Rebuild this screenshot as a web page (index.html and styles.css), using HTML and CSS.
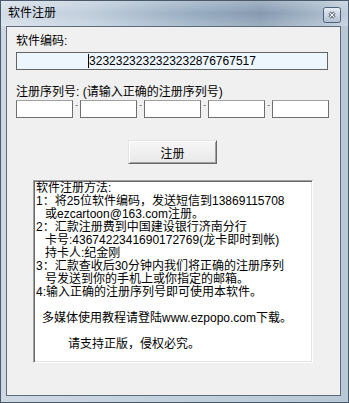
FILE: index.html
```html
<!DOCTYPE html>
<html lang="zh-CN">
<head>
<meta charset="UTF-8">
<title>软件注册</title>

<link rel="stylesheet" href="styles.css">
</head>

<body>

<div class="window">

    <div class="titlebar">
        <span class="title">软件注册</span>
        <span class="close">
            <svg width="18" height="16" viewBox="0 0 18 16">
                <defs>
                    <linearGradient id="closeBg" x1="0" y1="0" x2="0" y2="1">
                        <stop offset="0" stop-color="#e6edf4"/>
                        <stop offset="1" stop-color="#afbfd0"/>
                    </linearGradient>
                </defs>
                <rect x="0.5" y="0.5" width="17" height="15" rx="2" fill="url(#closeBg)" stroke="#4f6279"/>
                <path d="M6.5 5.5l5 5M11.5 5.5l-5 5" stroke="#2a3746" stroke-width="2.8"/>
                <path d="M6.5 5.5l5 5M11.5 5.5l-5 5" stroke="#fff" stroke-width="1.1"/>
            </svg>
        </span>
    </div>

    <div class="frame">
        <div class="client">

            <div class="label">软件编码:</div>
            <div class="code"><span class="value">3232323232323232876767517</span></div>

            <div class="label serialLabel">注册序列号: (请输入正确的注册序列号)</div>
            <div class="serial">
                <input class="part">
                <span class="sep">-</span>
                <input class="part">
                <span class="sep">-</span>
                <input class="part">
                <span class="sep">-</span>
                <input class="part">
                <span class="sep">-</span>
                <input class="part">
            </div>

            <button class="register">注册</button>

            <div class="help">
                <div>软件注册方法:</div>
                <div>1：将25位软件编码，发送短信到13869115708</div>
                <div class="sub">或ezcartoon@163.com注册。</div>
                <div>2：汇款注册费到中国建设银行济南分行</div>
                <div class="sub">卡号:4367422341690172769(龙卡即时到帐)</div>
                <div class="sub">持卡人:纪金刚</div>
                <div>3：汇款查收后30分钟内我们将正确的注册序列</div>
                <div class="sub">号发送到你的手机上或你指定的邮箱。</div>
                <div>4:输入正确的注册序列号即可使用本软件。</div>
                <div class="blank"></div>
                <div class="web">多媒体使用教程请登陆www.ezpopo.com下载。</div>
                <div class="blank"></div>
                <div class="notice">请支持正版，侵权必究。</div>
            </div>

        </div>
    </div>

</div>

</body>
</html>
```

FILE: styles.css
```css
body{
    margin:0;
    font-family:"Liberation Sans","Noto Sans CJK SC",sans-serif;
    font-size:12px;
    color:#000;
}

.window{
    width:349px;
    height:403px;
    box-sizing:border-box;
    border:1px solid #4b5a6a;
    background:linear-gradient(90deg,#cdd8e3,#bac8d6);
    display:flex;
    flex-direction:column;
}

.titlebar{
    height:25px;
    flex:none;
    display:flex;
    align-items:flex-start;
    padding-left:7px;
    background:
        linear-gradient(rgba(255,255,255,0.25),rgba(255,255,255,0) 50%,rgba(255,255,255,0.2)),
        linear-gradient(90deg,#d3dde7 0%,#c0cedc 25%,#97acc1 55%,#8599b0 75%,#a5b7c9 92%,#c0cddb 100%);
}

.title{
    margin-top:6px;
    line-height:13px;
}

.close{
    margin-left:auto;
    margin-right:7px;
    margin-top:6px;
    height:16px;
}

.close svg{
    display:block;
}

.frame{
    flex:1;
    display:flex;
    padding:0 7px 6px 5px;
}

.client{
    flex:1;
    border:1px solid #5c6b7b;
    background:#f0f0f0;
    padding:8px 11px 0 9px;
}

.label{
    line-height:13px;
}

.serialLabel{
    margin-top:16px;
}

.code{
    margin-top:4px;
    width:312px;
    height:18px;
    box-sizing:border-box;
    border:1px solid #646464;
    background:#eef6fd;
    text-align:center;
    line-height:16px;
}

.value{
    border-left:1px solid #000;
}

.serial{
    margin-top:1px;
    display:flex;
    align-items:flex-start;
}

.part{
    width:57px;
    height:18px;
    box-sizing:border-box;
    margin:0;
    padding:0 2px;
    border:1px solid;
    border-color:#a0a0a0 #6e6e6e #6e6e6e #6e6e6e;
    background:white;
    font:inherit;
    outline:none;
}

.sep{
    width:7px;
    text-align:center;
    font-size:8px;
    line-height:10px;
    color:#333;
}

.register{
    display:block;
    margin:22px auto 0;
    width:89px;
    height:24px;
    padding:0;
    border:1px solid;
    border-color:#e3e3e3 #696969 #696969 #e3e3e3;
    box-shadow:inset 1px 1px #fff,inset -1px -1px #a0a0a0;
    background:linear-gradient(#f6f6f6,#e9e9e9);
    font:inherit;
    color:#000;
}

.help{
    margin:16px 0 0 17px;
    width:280px;
    height:183px;
    box-sizing:border-box;
    border:1px solid;
    border-color:#a0a0a0 #fff #fff #a0a0a0;
    box-shadow:inset 1px 1px #696969,inset -1px -1px #e3e3e3;
    background:white;
    padding:1px 0 0 2px;
    line-height:13px;
    white-space:nowrap;
}

.sub{
    padding-left:9px;
}

.blank{
    height:13px;
}

.web{
    padding-left:6px;
}

.notice{
    padding-left:32px;
}
```
